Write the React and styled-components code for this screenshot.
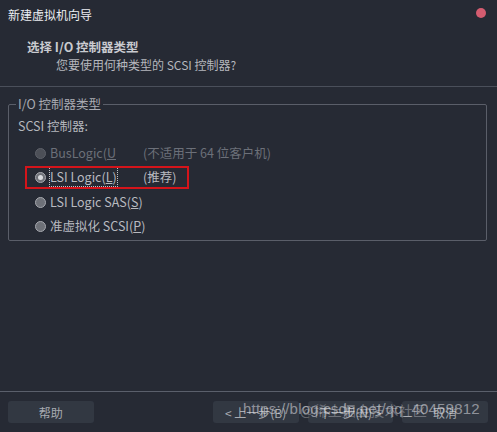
import React from 'react'
import styled, { createGlobalStyle } from 'styled-components'

const Global = createGlobalStyle`
  html, body { margin: 0; padding: 0; background: #262a34; }
  body { font-family: "Noto Sans CJK SC", "Noto Sans", sans-serif; }
`

const Window = styled.div`
  width: 497px;
  height: 432px;
  background: #262a34;
  display: flex;
  flex-direction: column;
  position: relative;
  overflow: hidden;
`

const TitleBar = styled.div`
  height: 28px;
  display: flex;
  align-items: center;
  justify-content: space-between;
  padding: 0 11px 0 8px;
  color: #eceef2;
  font-size: 12px;
`

const CloseDot = styled.span`
  width: 10px;
  height: 10px;
  border-radius: 50%;
  background: #d45c70;
  margin-top: -3px;
`

const Header = styled.div`
  height: 59px;
  border-bottom: 1px solid #4a4f5a;
  padding: 10px 0 0 27px;
  box-sizing: border-box;
`

const HeaderTitle = styled.div`
  color: #c9cbd0;
  font-weight: bold;
  font-size: 12.5px;
  line-height: 18px;
`

const HeaderSub = styled.div`
  color: #b5b7bd;
  font-size: 12px;
  line-height: 17px;
  padding-left: 29px;
`

const Body = styled.div`
  flex: 1;
  padding: 10px 10px 0 8px;
`

const Group = styled.fieldset`
  margin: 0;
  border: 1px solid #5a5e69;
  border-radius: 2px;
  padding: 2px 9px 6px 9px;
  height: 144px;
  box-sizing: border-box;
  color: #b5b7bd;
  font-size: 12.5px;
`

const Legend = styled.legend`
  padding: 0 2px;
  margin-left: -2px;
  color: #a9abb2;
  font-size: 12.5px;
  line-height: 14px;
`

const GroupLabel = styled.div`
  line-height: 18px;
  margin: 4px 0 5px;
`

const OptionRow = styled.div`
  display: grid;
  grid-template-columns: 108px auto;
  align-items: center;
  height: 24.5px;
  padding-left: 17px;
  white-space: nowrap;
  color: ${p => (p.disabled ? '#6c7079' : '#b8bac0')};
  position: relative;
`

const Radio = styled.span`
  display: inline-block;
  width: 9px;
  height: 9px;
  border-radius: 50%;
  border: 1.5px solid ${p => (p.disabled ? '#5e6169' : '#a7a9af')};
  background: ${p => (p.disabled ? '#4c4f57' : '#6e7178')};
  margin-right: 4px;
  vertical-align: -1px;
  position: relative;
  &::after {
    content: '';
    display: ${p => (p.checked ? 'block' : 'none')};
    position: absolute;
    left: 2px;
    top: 2px;
    width: 5px;
    height: 5px;
    border-radius: 50%;
    background: #d8dade;
  }
`

const LabelText = styled.span`
  outline: ${p => (p.focused ? '1px dotted #c0c2c8' : 'none')};
  u { text-decoration: underline; }
`

const Highlight = styled.div`
  position: absolute;
  left: 7px;
  top: 1px;
  width: 160px;
  height: 19px;
  border: 2px solid #d4141a;
  pointer-events: none;
`

const Footer = styled.div`
  border-top: 1px solid #5a5f6b;
  height: 40px;
  display: flex;
  align-items: center;
  padding: 0 9px 0 8px;
  position: relative;
`

const Button = styled.button`
  width: 86px;
  height: 22px;
  border: none;
  border-radius: 3px;
  background: #323842;
  color: #a8abb1;
  font-family: inherit;
  font-size: 12px;
  padding: 0;
  margin-left: ${p => p.gap || 0}px;
`

const Watermark = styled.div`
  position: absolute;
  left: 243px;
  top: 8px;
  color: rgba(225, 225, 230, 0.55);
  font-family: "Liberation Sans", "Noto Sans CJK SC", sans-serif;
  font-size: 15px;
  letter-spacing: 0.2px;
  white-space: nowrap;
  pointer-events: none;
`

const Watermark2 = styled(Watermark)`
  left: 300px;
  font-family: "Noto Sans CJK SC", sans-serif;
  font-size: 14px;
  color: rgba(225, 225, 230, 0.35);
`

const options = [
  { label: 'BusLogic(', key: 'U', tail: '', note: '(不适用于 64 位客户机)', disabled: true },
  { label: 'LSI Logic(', key: 'L', tail: ')', note: '(推荐)', checked: true },
  { label: 'LSI Logic SAS(', key: 'S', tail: ')' },
  { label: '准虚拟化 SCSI(', key: 'P', tail: ')' },
]

export default function App() {
  return (
    <Window>
      <Global />
      <TitleBar>
        <span>新建虚拟机向导</span>
        <CloseDot />
      </TitleBar>
      <Header>
        <HeaderTitle>选择 I/O 控制器类型</HeaderTitle>
        <HeaderSub>您要使用何种类型的 SCSI 控制器?</HeaderSub>
      </Header>
      <Body>
        <Group>
          <Legend>I/O 控制器类型</Legend>
          <GroupLabel>SCSI 控制器:</GroupLabel>
          {options.map(o => (
            <OptionRow key={o.key} disabled={o.disabled}>
              <span>
                <Radio disabled={o.disabled} checked={o.checked} />
                <LabelText focused={o.checked}>
                  {o.label}<u>{o.key}</u>{o.tail}
                </LabelText>
              </span>
              <span>{o.note}</span>
              {o.checked && <Highlight />}
            </OptionRow>
          ))}
        </Group>
      </Body>
      <Footer>
        <Button>帮助</Button>
        <Button gap={119}>&lt; 上一步(B)</Button>
        <Button gap={9}>下一步(N) &gt;</Button>
        <Button gap={9}>取消</Button>
        <Watermark>https://blog.csdn.net/qq_40458812</Watermark>
        <Watermark2>@稀土掘金技术社区</Watermark2>
      </Footer>
    </Window>
  )
}
